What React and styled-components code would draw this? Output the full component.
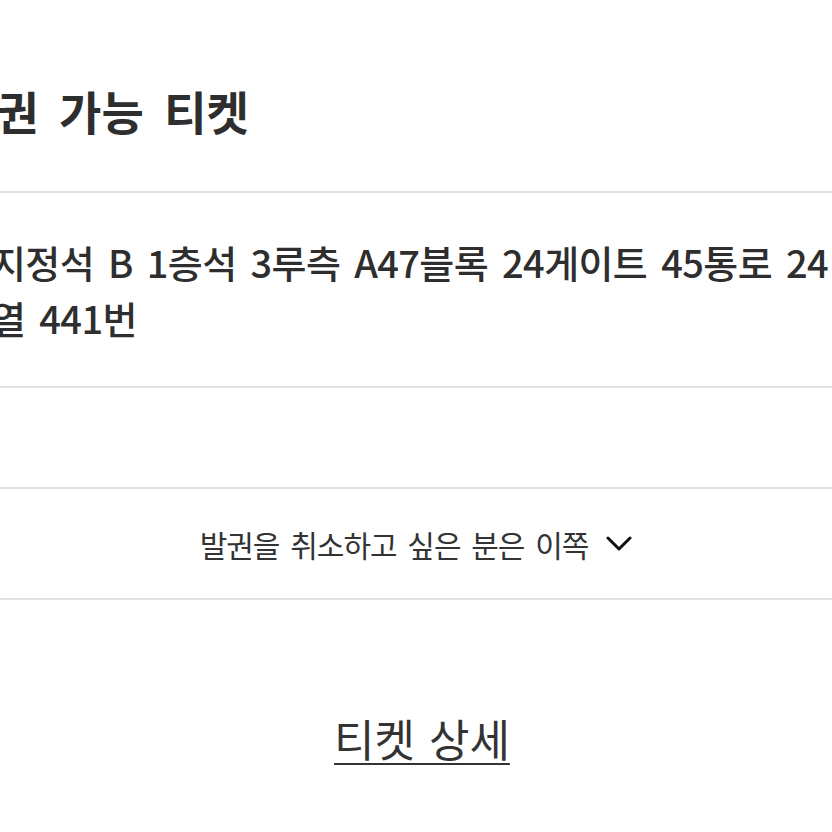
import React from "react";
import styled, { createGlobalStyle } from "styled-components";

const Global = createGlobalStyle`
  html, body {
    margin: 0;
    padding: 0;
    background: #ffffff;
    overflow: hidden;
  }
  body {
    font-family: "Noto Sans CJK KR", "Noto Sans", sans-serif;
    color: #333333;
  }
`;

const Page = styled.div`
  width: 832px;
  height: 832px;
  overflow: hidden;
  display: flex;
  flex-direction: column;
`;

const Section = styled.section`
  box-sizing: border-box;
  height: ${(p) => p.$h}px;
  padding-top: ${(p) => p.$pt || 0}px;
  border-bottom: 2px solid #e1e1e1;
  display: flex;
  flex-direction: column;
  justify-content: ${(p) => (p.$center ? "center" : "flex-start")};
  align-items: ${(p) => (p.$center ? "center" : "stretch")};
`;

const Title = styled.h2`
  margin: 0 0 0 -46px;
  font-size: 46px;
  line-height: 50px;
  font-weight: 700;
  word-spacing: 10px;
  color: #2e2e2e;
  white-space: nowrap;
`;

const SeatText = styled.p`
  margin: 0 0 0 -9px;
  font-size: 38px;
  line-height: 56px;
  font-weight: 500;
  word-spacing: 6px;
  letter-spacing: -0.6px;
  color: #2e2e2e;
  white-space: nowrap;
`;

const CancelToggle = styled.button`
  display: flex;
  align-items: center;
  gap: 18px;
  background: none;
  border: 0;
  padding: 0;
  font-family: inherit;
  font-size: 30px;
  font-weight: 400;
  letter-spacing: -1px;
  word-spacing: 5px;
  color: #333333;
  cursor: pointer;
`;

const Chevron = styled.svg`
  width: 26px;
  height: 16px;
  flex: none;
`;

const DetailArea = styled.div`
  display: flex;
  justify-content: center;
  padding: 110px 0 0 12px;
`;

const DetailLink = styled.a`
  font-size: 44px;
  line-height: 56px;
  font-weight: 400;
  color: #333333;
  text-decoration: underline;
  text-decoration-thickness: 2px;
  text-underline-offset: 6px;
  word-spacing: 4px;
`;

export default function App() {
  return (
    <Page>
      <Global />
      <Section $h={193} $pt={85}>
        <Title>발권 가능 티켓</Title>
      </Section>
      <Section $h={195} $pt={41}>
        <SeatText>
          지정석 B 1층석 3루측 A47블록 24게이트 45통로 24
          <br />
          열 441번
        </SeatText>
      </Section>
      <Section $h={101} />
      <Section $h={111} $center>
        <CancelToggle>
          발권을 취소하고 싶은 분은 이쪽
          <Chevron viewBox="0 0 26 16">
            <polyline
              points="2,2 13,13 24,2"
              fill="none"
              stroke="#111"
              strokeWidth="3"
              strokeLinecap="round"
              strokeLinejoin="round"
            />
          </Chevron>
        </CancelToggle>
      </Section>
      <DetailArea>
        <DetailLink href="#">티켓 상세</DetailLink>
      </DetailArea>
    </Page>
  );
}
